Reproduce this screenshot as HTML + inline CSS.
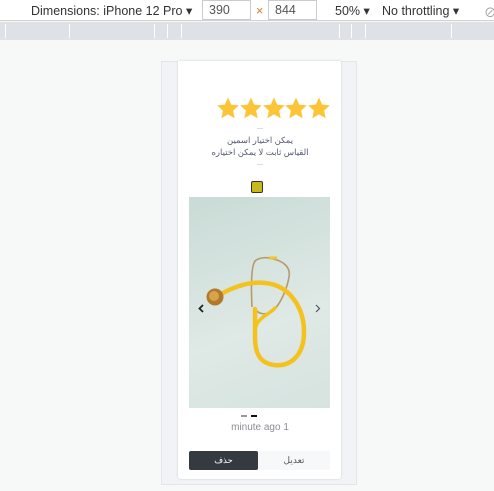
<!DOCTYPE html>
<html><head><meta charset="utf-8"><style>
*{margin:0;padding:0;box-sizing:border-box}
body{width:494px;height:491px;background:#f7f8f8;font-family:"Liberation Sans","Noto Sans CJK SC",sans-serif;position:relative;overflow:hidden}
.a{position:absolute}
.top{left:0;top:0;width:494px;height:21px;background:#fff;border-bottom:1px solid #d0d0d0;font-size:12.5px;color:#333}
.ruler{left:0;top:22px;width:494px;height:18px;background:#dee1e6}
.inp{border:1px solid #ccc;height:20px;top:0;font-size:12.5px;color:#555;padding:2px 6px}
</style></head><body>
<div class="a top">
<span class="a" style="left:31px;top:3px">Dimensions: iPhone 12 Pro ▾</span>
<div class="a inp" style="left:202px;width:49px">390</div>
<span class="a" style="left:256px;top:4px;color:#d87b2e">×</span>
<div class="a inp" style="left:268px;width:49px">844</div>
<span class="a" style="left:335px;top:3px">50% ▾</span>
<span class="a" style="left:382px;top:3px">No throttling ▾</span>
<span class="a" style="left:484px;top:2px;color:#999">⊘</span>
</div>
<div class="a ruler">
<div class="a" style="left:5px;top:2px;width:1px;height:14px;background:#fff"></div>
<div class="a" style="left:69px;top:2px;width:1px;height:14px;background:#fff"></div>
<div class="a" style="left:154px;top:2px;width:1px;height:14px;background:#fff"></div>
<div class="a" style="left:167px;top:2px;width:1px;height:14px;background:#fff"></div>
<div class="a" style="left:181px;top:2px;width:1px;height:14px;background:#fff"></div>
<div class="a" style="left:339px;top:2px;width:1px;height:14px;background:#fff"></div>
<div class="a" style="left:351px;top:2px;width:1px;height:14px;background:#fff"></div>
<div class="a" style="left:365px;top:2px;width:1px;height:14px;background:#fff"></div>
<div class="a" style="left:451px;top:2px;width:1px;height:14px;background:#fff"></div>
</div>
<div class="a" style="left:161px;top:61px;width:196px;height:424px;background:#f1f3f6;border:1px solid #e3e5e8"></div>
<div class="a" style="left:178px;top:61px;width:163px;height:418px;background:#fff;border-radius:0 0 3px 3px;box-shadow:0 0 2px #ccc"></div>
<svg class="a" style="left:217px;top:97px" width="114" height="24" viewBox="0 0 114 24">
<defs><path id="s" d="M11 0.5 L14.2 7.6 L21.8 8.4 L16.1 13.6 L17.7 21.3 L11 17.4 L4.3 21.3 L5.9 13.6 L0.2 8.4 L7.8 7.6 Z" fill="#fcc537"/></defs>
<use href="#s" x="0"/><use href="#s" x="23"/><use href="#s" x="46"/><use href="#s" x="68"/><use href="#s" x="91"/>
</svg>
<div class="a" style="left:257px;top:128px;width:6px;height:1px;background:#ddd"></div>
<div class="a" style="left:200px;top:134px;width:120px;text-align:center;font-size:8.5px;line-height:12px;color:#555a70" dir="rtl">يمكن اختيار اسمين<br>القياس ثابت لا يمكن اختياره</div>
<div class="a" style="left:257px;top:164px;width:6px;height:1px;background:#ddd"></div>
<div class="a" style="left:251px;top:181px;width:12px;height:12px;background:#c8b81a;border:1px solid #333;border-radius:2px"></div>
<div class="a" style="left:189px;top:197px;width:141px;height:211px;background:linear-gradient(160deg,#c9dbd6,#dfe9e6 60%,#d6e3df)">
<svg width="141" height="211" viewBox="0 0 141 211">
<path d="M63 110 C62 90 62 70 66 64 C70 60 80 60 84 62 C94 64 102 70 100 80 C98 92 92 106 84 114 C78 118 70 118 66 112" fill="none" stroke="#b79a6a" stroke-width="1.6"/>
<path d="M80 61 L88 61" stroke="#f1c232" stroke-width="3"/>
<path d="M32 97 C45 90 60 84 76 86 C100 88 115 110 115 135 C115 160 100 170 85 168 C70 166 66 155 66 140 L66 112" fill="none" stroke="#f4c21f" stroke-width="4.5" stroke-linecap="round"/>
<path d="M66 133 C68 120 80 118 86 111" fill="none" stroke="#f4c21f" stroke-width="3.5" stroke-linecap="round"/>
<circle cx="26" cy="100" r="8.5" fill="#b27a28"/><circle cx="25" cy="99" r="5" fill="#d9a24c"/>
<path d="M14 108 l-3.5 3.5 3.5 3.5" fill="none" stroke="#222" stroke-width="1.8"/>
<path d="M127 108 l3.5 3.5 -3.5 3.5" fill="none" stroke="#555" stroke-width="1.2"/>
</svg></div>
<div class="a" style="left:241px;top:415px;width:6px;height:2px;background:#999"></div>
<div class="a" style="left:251px;top:415px;width:6px;height:2px;background:#111"></div>
<div class="a" style="left:190px;top:422px;width:140px;text-align:center;font-size:10px;color:#8a8d96">minute ago 1</div>
<div class="a" style="left:189px;top:451px;width:69px;height:19px;background:#343a40;border-radius:2px;color:#fff;font-size:8.5px;text-align:center;line-height:19px">حذف</div>
<div class="a" style="left:258px;top:451px;width:72px;height:19px;background:#f7f8fa;color:#555;font-size:9px;text-align:center;line-height:19px">تعديل</div>
</body></html>
